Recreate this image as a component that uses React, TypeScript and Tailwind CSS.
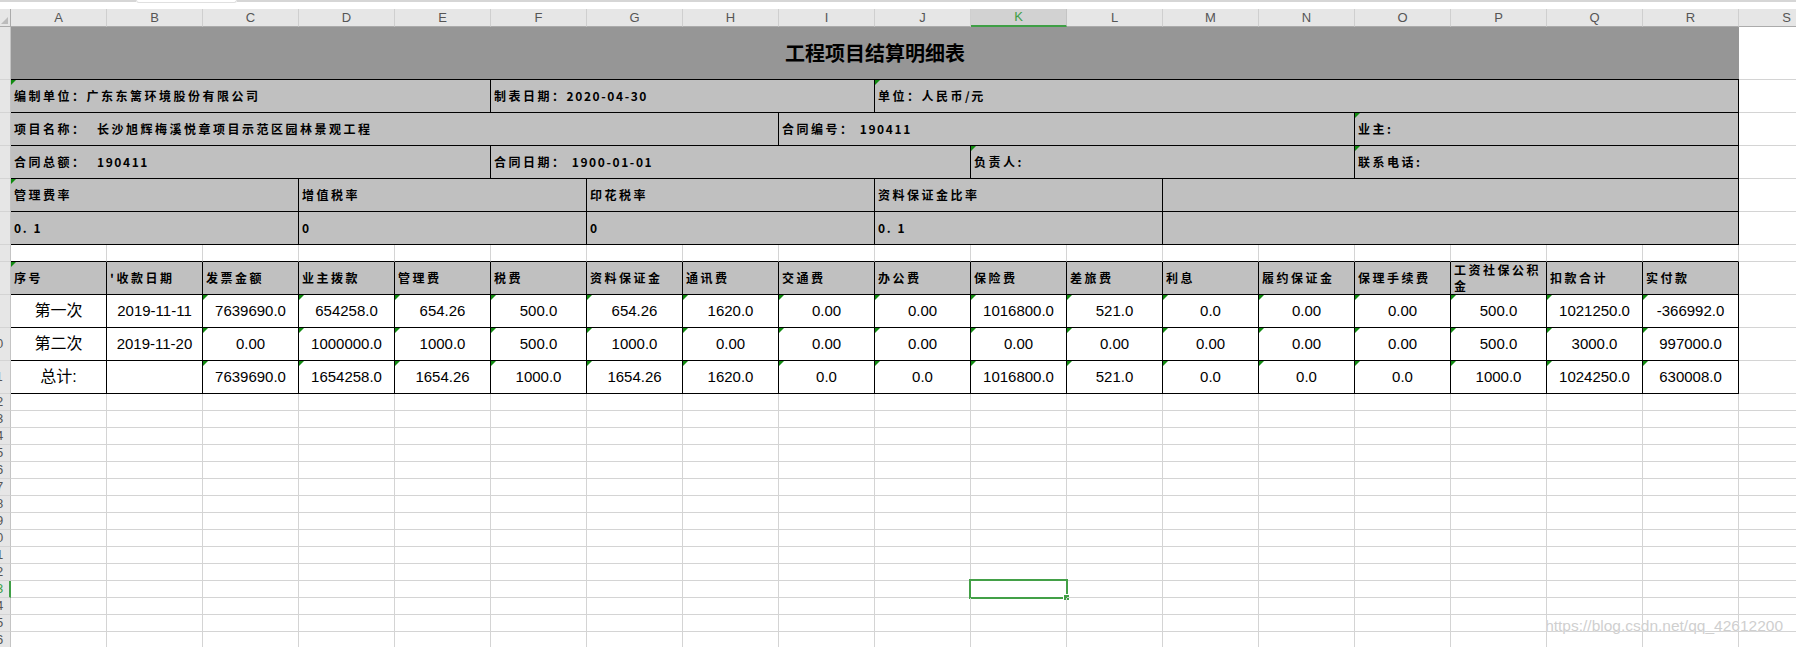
import type { ReactNode } from 'react';

// Excel-like sheet: 工程项目结算明细表
const COLS = 'ABCDEFGHIJKLMNOPQRS'.split('');

const SPAN: Record<number, string> = {
  1: 'w-[96px]',
  3: 'w-[288px]',
  4: 'w-[384px]',
  5: 'w-[480px]',
  6: 'w-[576px]',
  8: 'w-[768px]',
  9: 'w-[864px]',
  18: 'w-[1728px]',
};

const GRID = 'border-[#d4d4d4]';
const BOX = 'border-black bg-[#c0c0c0]';

function Mark() {
  return (
    <span className="absolute left-0 top-0 h-0 w-0 border-r-[5px] border-t-[5px] border-r-transparent border-t-[#118a11]" />
  );
}

function RowHead({ n, active }: { n?: number; active?: boolean }) {
  return (
    <div
      className={`relative w-[11px] shrink-0 overflow-hidden border-b border-[#d4d4d4] bg-[#e6e6e6] ${
        active ? 'border-r-2 border-r-[#3f9f46] bg-[#d9d9d9]' : 'border-r border-r-[#c4c4c4]'
      }`}
    >
      <div
        className={`-ml-[19px] flex h-full w-[30px] items-center justify-center text-[13px] ${
          active ? 'text-[#3f9f46]' : 'text-[#555]'
        }`}
      >
        {n}
      </div>
    </div>
  );
}

function Cell({
  span = 1,
  className = '',
  mark,
  children,
}: {
  span?: number;
  className?: string;
  mark?: boolean;
  children?: ReactNode;
}) {
  return (
    <div className={`relative shrink-0 border-b border-r ${SPAN[span]} ${className}`}>
      {mark && <Mark />}
      {children}
    </div>
  );
}

// digits and latin get a tighter spacing than the CJK glyphs
function Label({ text }: { text: string }) {
  const parts = text.split(/([0-9./\-]+)/).filter(Boolean);
  return (
    <div className="flex h-full items-center whitespace-pre pl-[3px] font-['Noto_Sans_CJK_SC',sans-serif] text-[12px] font-bold tracking-[2.5px] text-black">
      {parts.map((p, i) =>
        /^[0-9./\-]+$/.test(p) ? (
          <span key={i} className="tracking-[1.6px]">
            {p}
          </span>
        ) : (
          <span key={i}>{p}</span>
        )
      )}
    </div>
  );
}

const HEADERS = [
  '序号',
  "'收款日期",
  '发票金额',
  '业主拨款',
  '管理费',
  '税费',
  '资料保证金',
  '通讯费',
  '交通费',
  '办公费',
  '保险费',
  '差旅费',
  '利息',
  '履约保证金',
  '保理手续费',
  '工资社保公积金',
  '扣款合计',
  '实付款',
];

const ROWS = [
  ['第一次', '2019-11-11', '7639690.0', '654258.0', '654.26', '500.0', '654.26', '1620.0', '0.00', '0.00', '1016800.0', '521.0', '0.0', '0.00', '0.00', '500.0', '1021250.0', '-366992.0'],
  ['第二次', '2019-11-20', '0.00', '1000000.0', '1000.0', '500.0', '1000.0', '0.00', '0.00', '0.00', '0.00', '0.00', '0.00', '0.00', '0.00', '500.0', '3000.0', '997000.0'],
  ['总计:', '', '7639690.0', '1654258.0', '1654.26', '1000.0', '1654.26', '1620.0', '0.0', '0.0', '1016800.0', '521.0', '0.0', '0.0', '0.0', '1000.0', '1024250.0', '630008.0'],
];

export default function App() {
  const blankRows = Array.from({ length: 16 }, (_, i) => 12 + i);

  return (
    <div className="relative h-[647px] w-[1796px] overflow-hidden bg-white font-['Liberation_Sans','Noto_Sans_CJK_SC',sans-serif] text-black">
      {/* strip under the formula bar */}
      <div className="flex h-[9px]">
        <div className="w-[136px] border-t-2 border-[#d6d6d6]" />
        <div className="h-[3px] w-[101px] rounded-b-[3px] border-x border-b border-[#e0e0e0]" />
        <div className="flex-1 border-t-2 border-[#d6d6d6]" />
      </div>

      {/* column letters */}
      <div className="flex h-[18px]">
        <div className="relative w-[11px] shrink-0 border-b border-r border-[#ababab] bg-[#e6e6e6]">
          <span className="absolute bottom-[2px] right-[2px] h-0 w-0 border-b-[7px] border-l-[7px] border-b-[#bcbcbc] border-l-transparent" />
        </div>
        {COLS.map((c) => (
          <div
            key={c}
            className={`flex w-[96px] shrink-0 items-center justify-center border-r text-[13px] ${
              c === 'K'
                ? 'border-b-2 border-r-[#c4c4c4] border-b-[#3f9f46] bg-[#d2d2d2] text-[#3f9f46]'
                : 'border-b border-r-[#cfcfcf] border-b-[#ababab] bg-[#e6e6e6] text-[#555]'
            }`}
          >
            {c}
          </div>
        ))}
      </div>

      {/* 1: title */}
      <div className="flex h-[53px]">
        <RowHead />
        <div className="flex w-[1728px] shrink-0 items-center justify-center border-b border-black bg-[#969696] font-['Noto_Sans_CJK_SC',sans-serif] text-[20px] font-bold">
          工程项目结算明细表
        </div>
        <Cell className={GRID} />
      </div>

      {/* 2 */}
      <div className="flex h-[33px]">
        <RowHead />
        <Cell span={5} className={BOX} mark>
          <Label text="编制单位：广东东篱环境股份有限公司" />
        </Cell>
        <Cell span={4} className={BOX}>
          <Label text="制表日期：2020-04-30" />
        </Cell>
        <Cell span={9} className={BOX} mark>
          <Label text="单位：人民币/元" />
        </Cell>
        <Cell className={GRID} />
      </div>

      {/* 3 */}
      <div className="flex h-[33px]">
        <RowHead />
        <Cell span={8} className={BOX}>
          <Label text="项目名称：  长沙旭辉梅溪悦章项目示范区园林景观工程" />
        </Cell>
        <Cell span={6} className={BOX}>
          <Label text="合同编号： 190411" />
        </Cell>
        <Cell span={4} className={BOX} mark>
          <Label text="业主:" />
        </Cell>
        <Cell className={GRID} />
      </div>

      {/* 4 */}
      <div className="flex h-[33px]">
        <RowHead />
        <Cell span={5} className={BOX}>
          <Label text="合同总额：  190411" />
        </Cell>
        <Cell span={5} className={BOX}>
          <Label text="合同日期： 1900-01-01" />
        </Cell>
        <Cell span={4} className={BOX} mark>
          <Label text="负责人:" />
        </Cell>
        <Cell span={4} className={BOX} mark>
          <Label text="联系电话:" />
        </Cell>
        <Cell className={GRID} />
      </div>

      {/* 5 */}
      <div className="flex h-[33px]">
        <RowHead />
        <Cell span={3} className={BOX} mark>
          <Label text="管理费率" />
        </Cell>
        <Cell span={3} className={BOX}>
          <Label text="增值税率" />
        </Cell>
        <Cell span={3} className={BOX}>
          <Label text="印花税率" />
        </Cell>
        <Cell span={3} className={BOX}>
          <Label text="资料保证金比率" />
        </Cell>
        <Cell span={6} className={BOX} />
        <Cell className={GRID} />
      </div>

      {/* 6 */}
      <div className="flex h-[33px]">
        <RowHead />
        <Cell span={3} className={BOX}>
          <Label text="0. 1" />
        </Cell>
        <Cell span={3} className={BOX}>
          <Label text="0" />
        </Cell>
        <Cell span={3} className={BOX}>
          <Label text="0" />
        </Cell>
        <Cell span={3} className={BOX}>
          <Label text="0. 1" />
        </Cell>
        <Cell span={6} className={BOX} />
        <Cell className={GRID} />
      </div>

      {/* 7: spacer row */}
      <div className="flex h-[17px]">
        <RowHead />
        {COLS.map((c) => (
          <Cell key={c} className={c === 'S' ? GRID : 'border-b-black border-r-[#d4d4d4]'} />
        ))}
      </div>

      {/* 8: table head */}
      <div className="flex h-[33px]">
        <RowHead />
        {HEADERS.map((h, i) => (
          <Cell key={h} className={BOX} mark={i === 0}>
            <div className="flex h-full items-center pl-[3px] font-['Noto_Sans_CJK_SC',sans-serif] text-[12px] font-bold leading-[16px] tracking-[2.5px]">
              {h}
            </div>
          </Cell>
        ))}
        <Cell className={GRID} />
      </div>

      {/* 9-11: data */}
      {ROWS.map((row, r) => (
        <div key={r} className="flex h-[33px]">
          <RowHead n={9 + r} />
          {row.map((v, i) => (
            <Cell key={i} className="border-black bg-white" mark={i >= 2}>
              <div className={`flex h-full items-center justify-center ${i === 0 ? 'text-[16px]' : 'text-[15px]'}`}>
                {v}
              </div>
            </Cell>
          ))}
          <Cell className={GRID} />
        </div>
      ))}

      {/* empty grid */}
      {blankRows.map((n) => (
        <div key={n} className="flex h-[17px]">
          <RowHead n={n} active={n === 23} />
          {COLS.map((c) => (
            <Cell key={c} className={GRID}>
              {n === 23 && c === 'K' && (
                <div className="absolute -left-[2px] -top-[2px] h-[20px] w-[99px] border-2 border-[#43a047]">
                  <span className="absolute -bottom-[4px] -right-[4px] h-[7px] w-[7px] border border-white bg-[#43a047]" />
                </div>
              )}
            </Cell>
          ))}
        </div>
      ))}

      <div className="absolute bottom-[10px] right-[13px] text-[15.5px] text-[#cfcfcf] [text-shadow:0_0_1px_#ffffff]">
        https://blog.csdn.net/qq_42612200
      </div>
    </div>
  );
}
